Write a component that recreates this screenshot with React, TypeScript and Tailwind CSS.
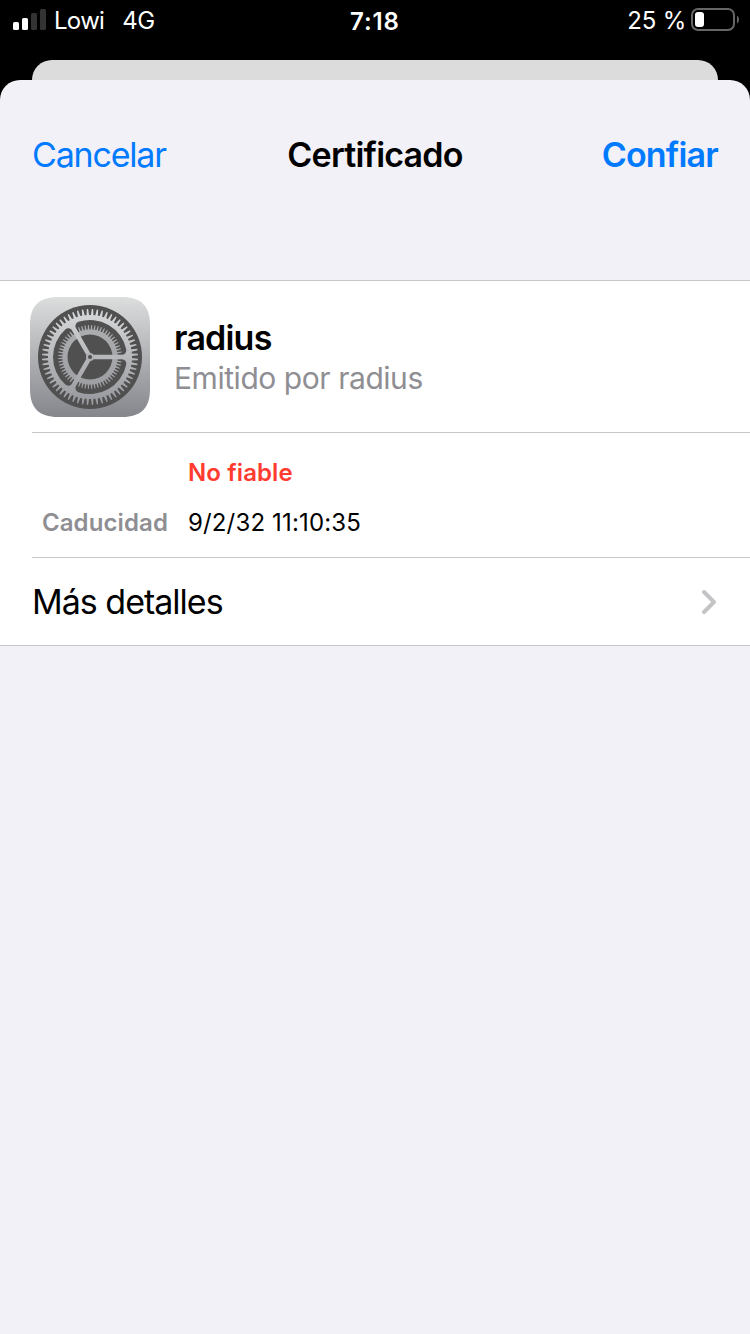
const TEETH = 60;

function toothedRing(base: number, tip: number) {
  const step = (Math.PI * 2) / TEETH;
  const points: string[] = [];
  for (let i = 0; i < TEETH; i++) {
    const a = (i + 0.5) * step;
    const steps: [number, number][] = [
      [base, -0.29],
      [tip, -0.13],
      [tip, 0.13],
      [base, 0.29],
    ];
    for (const [r, offset] of steps) {
      const t = a + offset * step;
      points.push(`${(r * Math.cos(t)).toFixed(2)} ${(r * Math.sin(t)).toFixed(2)}`);
    }
  }
  return `M${points.join("L")}Z`;
}

function windowPath(rotation: number) {
  const R = 37;
  const half = 2.2;
  const f = 4.5;
  const cx = Math.sqrt((R - f) ** 2 - (half + f) ** 2);
  const k = R / (R - f);
  const mirror = ([x, y]: number[]) => {
    const c = -0.5;
    const s = -Math.sqrt(3) / 2;
    return [x * c + y * s, x * s - y * c];
  };
  const cos = Math.cos(rotation);
  const sin = Math.sin(rotation);
  const p = ([x, y]: number[]) => `${(x * cos - y * sin).toFixed(2)} ${(x * sin + y * cos).toFixed(2)}`;
  const line = [cx, -half];
  const rim = [cx * k, -(half + f) * k];
  return `M${p([half / Math.sqrt(3), -half])}L${p(line)}A${f} ${f} 0 0 0 ${p(rim)}A${R} ${R} 0 0 0 ${p(mirror(rim))}A${f} ${f} 0 0 0 ${p(mirror(line))}Z`;
}

const windows = [0, 1, 2].map((i) => windowPath((i * Math.PI * 2) / 3)).join("");
const outerGear = toothedRing(42, 48) + windows;
const innerGear = toothedRing(27.5, 32) + "M22.5 0A22.5 22.5 0 1 0 -22.5 0A22.5 22.5 0 1 0 22.5 0Z";

function SettingsIcon() {
  return (
    <svg className="size-[120px] shrink-0" viewBox="-60 -60 120 120">
      <defs>
        <linearGradient id="tile" x1="0" y1="0" x2="0" y2="1">
          <stop offset="0" stopColor="#dcdddd" />
          <stop offset="1" stopColor="#85868c" />
        </linearGradient>
        <linearGradient id="gear" gradientUnits="userSpaceOnUse" x1="0" y1="-48" x2="0" y2="48">
          <stop offset="0" stopColor="#d8d9da" />
          <stop offset="1" stopColor="#96979c" />
        </linearGradient>
        <linearGradient id="inner" gradientUnits="userSpaceOnUse" x1="0" y1="-32" x2="0" y2="32">
          <stop offset="0" stopColor="#adaeb0" />
          <stop offset="1" stopColor="#9d9ea2" />
        </linearGradient>
      </defs>
      <path
        fill="url(#tile)"
        d="M-32 -60H32C51 -60 60 -51 60 -32V32C60 51 51 60 32 60H-32C-51 60 -60 51 -60 32V-32C-60 -51 -51 -60 -32 -60Z"
      />
      <circle r="52" fill="#505050" />
      <path fill="url(#inner)" fillRule="evenodd" d={innerGear} />
      <path fill="url(#gear)" fillRule="evenodd" d={outerGear} />
      <circle r="4" fill="#aeafb2" />
      <circle r="2" fill="#505050" />
    </svg>
  );
}

function StatusBar() {
  return (
    <div className="grid h-[60px] grid-cols-3 items-start bg-black text-white">
      <div className="flex h-[42px] items-center pl-[13px]">
        <svg className="mb-[3px] h-[21px] w-[33px]" viewBox="0 0 33 21">
          <rect x="0" y="13" width="6" height="8" rx="1.5" fill="#fff" />
          <rect x="9" y="9" width="6" height="12" rx="1.5" fill="#fff" />
          <rect x="18" y="4" width="6" height="17" rx="1.5" fill="#333" />
          <rect x="27" y="0" width="6" height="21" rx="1.5" fill="#333" />
        </svg>
        <span className="ml-2 text-[24px] tracking-[-0.7px]">Lowi</span>
        <span className="ml-[18px] text-[24px] tracking-[-0.5px]">4G</span>
      </div>
      <div className="flex h-[42px] items-center justify-center pt-px text-[24px] font-semibold tracking-[0.9px]">7:18</div>
      <div className="flex h-[42px] items-center justify-end pr-[11px]">
        <span className="mr-[5px] text-[24px] tracking-[-0.2px]">25 %</span>
        <svg className="mb-1 h-[24px] w-[48px]" viewBox="0 0 48 24">
          <rect x="1" y="2" width="42" height="21" rx="6" fill="none" stroke="#666" strokeWidth="2" />
          <rect x="4" y="5" width="9" height="15" rx="3" fill="#fff" />
          <path d="M46 8.500Q48 9.500 48 12.500Q48 15.500 46 16.500Z" fill="#666" />
        </svg>
      </div>
    </div>
  );
}

export default function App() {
  return (
    <div className="flex h-[1334px] w-[750px] flex-col overflow-hidden bg-black font-[Inter,sans-serif] whitespace-nowrap text-black">
      <StatusBar />
      <div className="mx-8 h-5 shrink-0 rounded-t-[20px] bg-[#dcdcdc]" />
      <main className="flex-1 rounded-t-[20px] bg-[#f2f1f7]">
        <header className="grid h-[200px] grid-cols-3 items-start px-8 pt-[54px] text-[34px] leading-[42px]">
          <button className="text-left tracking-[-1.2px] text-[#007aff]">Cancelar</button>
          <h1 className="text-center font-semibold tracking-[-0.8px]">Certificado</h1>
          <button className="text-right font-semibold tracking-[-0.8px] text-[#007aff]">Confiar</button>
        </header>
        <section className="border-y border-[#c6c6c8] bg-white">
          <div className="ml-8 flex h-[152px] items-center border-b border-[#c6c6c8]">
            <div className="-ml-0.5">
              <SettingsIcon />
            </div>
            <div className="ml-6">
              <h2 className="text-[34px] leading-[42px] font-semibold tracking-[-0.8px]">radius</h2>
              <p className="text-[30px] leading-[38px] tracking-[-0.45px] text-[#8e8e93]">Emitido por radius</p>
            </div>
          </div>
          <dl className="ml-8 grid h-[125px] grid-cols-[136px_1fr] content-start gap-x-5 gap-y-5 border-b border-[#c6c6c8] pt-[25px] text-[24px] leading-[30px]">
            <dd className="col-start-2 font-semibold tracking-[0.1px] text-[#ff3b30]">No fiable</dd>
            <dt className="text-right font-semibold tracking-[0.1px] text-[#8e8e93]">Caducidad</dt>
            <dd className="tracking-[0.15px]">9/2/32 11:10:35</dd>
          </dl>
          <div className="flex h-[87px] items-center justify-between pr-[33px] pl-8">
            <span className="text-[34px] tracking-[-1px]">Más detalles</span>
            <svg className="h-[26px] w-[16px]" viewBox="0 0 16 26" fill="none">
              <path d="M3 3L13 13L3 23" stroke="#c4c4c6" strokeWidth="4" strokeLinecap="round" strokeLinejoin="round" />
            </svg>
          </div>
        </section>
      </main>
    </div>
  );
}
